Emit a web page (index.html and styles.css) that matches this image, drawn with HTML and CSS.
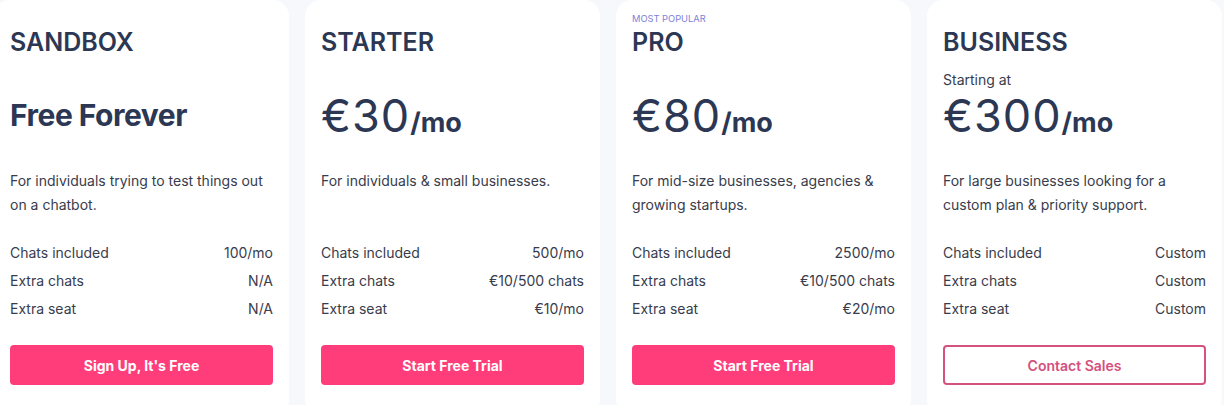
FILE: index.html
```html
<!DOCTYPE html>
<html lang="en">
<head>
<meta charset="utf-8">
<title>Pricing</title>
<link rel="stylesheet" href="styles.css">
</head>
<body>
<main class="plans">
  <section class="card">
    <div class="tag"></div>
    <h2 class="title">SANDBOX</h2>
    <div class="price-area">
      <div class="free">Free Forever</div>
    </div>
    <p class="desc">For individuals trying to test things out on a chatbot.</p>
    <ul class="rows">
      <li><span>Chats included</span><span>100/mo</span></li>
      <li><span>Extra chats</span><span>N/A</span></li>
      <li><span>Extra seat</span><span>N/A</span></li>
    </ul>
    <a class="btn" href="#">Sign Up, It's Free</a>
  </section>
  <section class="card">
    <div class="tag"></div>
    <h2 class="title">STARTER</h2>
    <div class="price-area">
      <div class="price"><span class="amount">€30</span><span class="per">/mo</span></div>
    </div>
    <p class="desc">For individuals &amp; small businesses.</p>
    <ul class="rows">
      <li><span>Chats included</span><span>500/mo</span></li>
      <li><span>Extra chats</span><span>€10/500 chats</span></li>
      <li><span>Extra seat</span><span>€10/mo</span></li>
    </ul>
    <a class="btn" href="#">Start Free Trial</a>
  </section>
  <section class="card">
    <div class="tag">MOST POPULAR</div>
    <h2 class="title">PRO</h2>
    <div class="price-area">
      <div class="price"><span class="amount">€80</span><span class="per">/mo</span></div>
    </div>
    <p class="desc">For mid-size businesses, agencies &amp; growing startups.</p>
    <ul class="rows">
      <li><span>Chats included</span><span>2500/mo</span></li>
      <li><span>Extra chats</span><span>€10/500 chats</span></li>
      <li><span>Extra seat</span><span>€20/mo</span></li>
    </ul>
    <a class="btn" href="#">Start Free Trial</a>
  </section>
  <section class="card">
    <div class="tag"></div>
    <h2 class="title">BUSINESS</h2>
    <div class="price-area">
      <div class="starting">Starting at</div>
      <div class="price"><span class="amount">€300</span><span class="per">/mo</span></div>
    </div>
    <p class="desc">For large businesses looking for a custom plan &amp; priority support.</p>
    <ul class="rows">
      <li><span>Chats included</span><span>Custom</span></li>
      <li><span>Extra chats</span><span>Custom</span></li>
      <li><span>Extra seat</span><span>Custom</span></li>
    </ul>
    <a class="btn btn-outline" href="#">Contact Sales</a>
  </section>
</main>
</body>
</html>
```

FILE: styles.css
```css
* { box-sizing: border-box; }

html, body {
  margin: 0;
  padding: 0;
  background: #f7f8fc;
  overflow: hidden;
}

body {
  font-family: Inter, "Noto Sans", sans-serif;
  color: #383c4c;
}

.plans {
  display: flex;
  gap: 16px;
  margin-left: -6px;
  padding-top: 0;
}

.card {
  flex: 0 0 295px;
  width: 295px;
  background: #ffffff;
  border-radius: 16px;
  padding: 12px 16px 30px;
  display: flex;
  flex-direction: column;
}

.tag {
  height: 14px;
  font-size: 9.3px;
  line-height: 14px;
  color: #7d7fd8;
}

.title {
  margin: 0;
  height: 32px;
  font-size: 25px;
  line-height: 32px;
  font-weight: 600;
  color: #2c3754;
}

.price-area {
  height: 92px;
  display: flex;
  flex-direction: column;
  justify-content: flex-end;
}

.starting {
  font-size: 14px;
  line-height: 24px;
  color: #383c4c;
}

.free {
  font-size: 30px;
  line-height: 48px;
  font-weight: 700;
  color: #2c3754;
  letter-spacing: -0.5px;
  margin-bottom: 11px;
}

.price {
  line-height: 48px;
  color: #2c3754;
  white-space: nowrap;
}

.amount {
  font-size: 45px;
  font-weight: 400;
  letter-spacing: 1px;
}

.per {
  font-size: 27px;
  font-weight: 700;
}

.desc {
  margin: 19px 0 0;
  height: 48px;
  font-size: 14px;
  line-height: 24px;
}

.rows {
  list-style: none;
  margin: 22px 0 0;
  padding: 0;
}

.rows li {
  display: flex;
  justify-content: space-between;
  height: 28px;
  font-size: 14px;
  line-height: 28px;
}

.btn {
  margin-top: 22px;
  height: 40px;
  border-radius: 4px;
  background: #ff3d7a;
  color: #ffffff;
  font-size: 14px;
  font-weight: 700;
  text-decoration: none;
  display: flex;
  align-items: center;
  justify-content: center;
}

.btn-outline {
  background: #ffffff;
  color: #d4507e;
  border: 2px solid #d4527f;
  font-weight: 600;
}
```
